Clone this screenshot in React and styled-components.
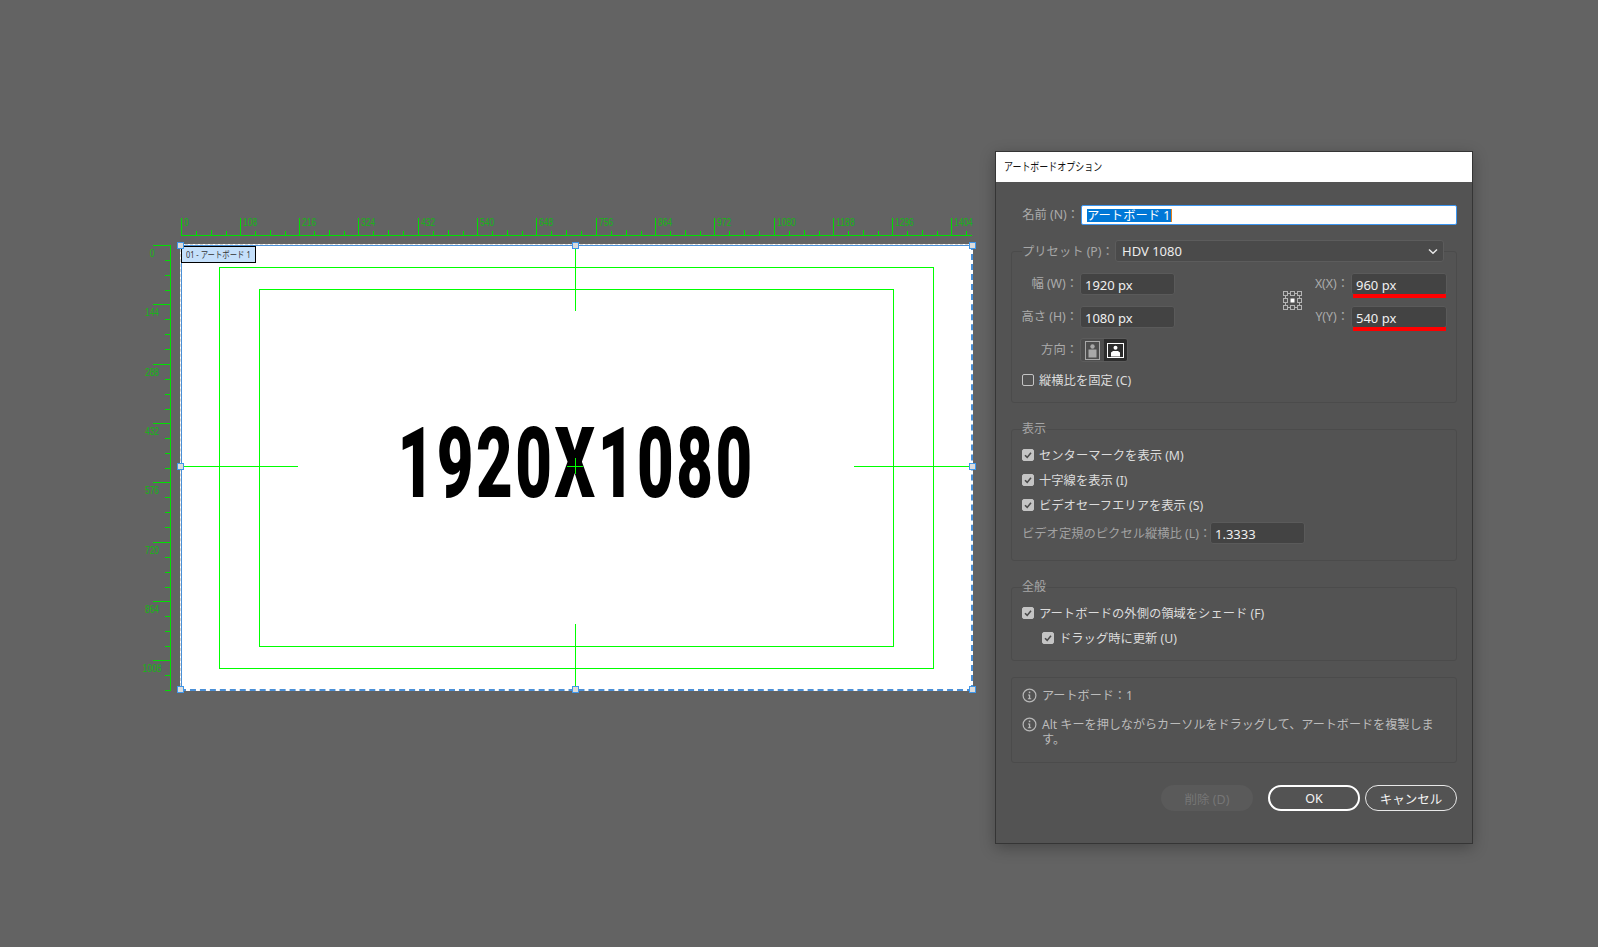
import React from "react";
import styled, { createGlobalStyle } from "styled-components";

const GREEN = "#00e000";
const UI_FONT = `"Noto Sans", "Noto Sans CJK JP", sans-serif`;

const GlobalStyle = createGlobalStyle`
  html, body {
    margin: 0;
    height: 100%;
    background: #636363;
  }
  * {
    box-sizing: border-box;
  }
`;

const Page = styled.div`
  position: relative;
  width: 1598px;
  height: 947px;
  overflow: hidden;
  background: #636363;
  font-family: ${UI_FONT};
`;

/* ---------- canvas ---------- */

const RulerSvg = styled.svg`
  position: absolute;
  left: 0;
  top: 0;
  pointer-events: none;
`;

const Artboard = styled.div`
  position: absolute;
  left: 180px;
  top: 244px;
  width: 793px;
  height: 447px;
  background: #fff;
  display: flex;
  align-items: center;
  justify-content: center;
  border-top: 1px dashed #d8d8d8;
  border-left: 1px dashed #d8d8d8;
  border-right: 2px dashed #4a8fd6;
  border-bottom: 2px dashed #4a8fd6;
  box-shadow: inset 1px 1px 0 #4a8fd6;
`;

const BoardLabel = styled.div`
  position: absolute;
  left: 0px;
  top: 1px;
  width: 75px;
  height: 17px;
  padding-left: 4px;
  background: #c5e0fb;
  border: 1px solid #000;
  color: #333;
  font-size: 9px;
  line-height: 15px;
  white-space: nowrap;
`;

/* the source UI font has narrow kana, so these strings get squeezed */
const Narrow = styled.span`
  display: inline-block;
  transform: scaleX(${(p) => p.$x});
  transform-origin: left center;
`;

const SafeArea = styled.div`
  position: absolute;
  border: 1px solid #00ff00;
  left: ${(p) => p.$left}px;
  top: ${(p) => p.$top}px;
  width: ${(p) => p.$w}px;
  height: ${(p) => p.$h}px;
`;

const Mark = styled.div`
  position: absolute;
  background: #00ff00;
  left: ${(p) => p.$left}px;
  top: ${(p) => p.$top}px;
  width: ${(p) => p.$w}px;
  height: ${(p) => p.$h}px;
`;

const Handle = styled.div`
  position: absolute;
  width: 7px;
  height: 7px;
  background: #dcdcdc;
  border: 1px solid #3f97ea;
  left: ${(p) => p.$left}px;
  top: ${(p) => p.$top}px;
`;

const BigTitle = styled.div`
  margin-top: -8px;
  font-family: Roboto, "Liberation Sans", sans-serif;
  font-weight: 900;
  font-size: 99px;
  line-height: 1;
  letter-spacing: 4px;
  color: #000;
  transform: scaleX(0.64);
  white-space: nowrap;
`;

const Ruler = () => {
  const topMajors = [];
  const leftMajors = [];
  for (let i = 0; i < 14; i++) topMajors.push(i);
  for (let i = 0; i < 8; i++) leftMajors.push(i);
  const step = 59.3;
  return (
    <RulerSvg width="1000" height="720" shapeRendering="crispEdges">
      <g stroke={GREEN} strokeWidth="1">
        <line x1="180.5" y1="235.5" x2="972" y2="235.5" />
        <line x1="170.5" y1="245" x2="170.5" y2="691" />
        <line x1="165" y1="690.5" x2="170" y2="690.5" />
        {topMajors.map((i) => {
          const x = Math.round(180.5 + i * step) + 0.5;
          return (
            <g key={i}>
              <line x1={x} y1="218" x2={x} y2="235" />
              {[1, 2, 3].map((q) => {
                const qx = Math.round(x + (q * step) / 4) + 0.5;
                if (qx > 971) return null;
                return <line key={q} x1={qx} y1={q === 2 ? 230 : 231} x2={qx} y2="235" />;
              })}
            </g>
          );
        })}
        {leftMajors.map((i) => {
          const y = Math.round(245 + i * step) + 0.5;
          return (
            <g key={i}>
              <line x1="153" y1={y} x2="170" y2={y} />
              {[1, 2, 3].map((q) => {
                const qy = Math.round(y + (q * step) / 4) + 0.5;
                if (qy > 690) return null;
                return <line key={q} x1="165" y1={qy} x2="170" y2={qy} />;
              })}
            </g>
          );
        })}
      </g>
      <g fill="#12b812" fontSize="10.5" fontFamily={`"Liberation Sans", sans-serif`} shapeRendering="auto">
        {topMajors.map((i) => {
          const label = String(i * 108);
          return (
            <text
              key={i}
              x={Math.round(180.5 + i * step) + 3}
              y="226"
              textLength={label.length * 4.7}
              lengthAdjust="spacingAndGlyphs"
            >
              {label}
            </text>
          );
        })}
        {leftMajors.map((i) => {
          const label = String(i * 144);
          return (
            <text
              key={i}
              x={152 - (label.length * 4.7) / 2}
              y={Math.round(245 + i * step) + 11.5}
              textLength={label.length * 4.7}
              lengthAdjust="spacingAndGlyphs"
            >
              {label}
            </text>
          );
        })}
      </g>
    </RulerSvg>
  );
};

/* ---------- dialog ---------- */

const Dialog = styled.div`
  position: absolute;
  left: 995px;
  top: 151px;
  width: 478px;
  height: 693px;
  background: #535353;
  border: 1px solid #353535;
  box-shadow: 0 4px 14px rgba(0, 0, 0, 0.28);
  color: #d6d6d6;
  font-size: 12.3px;
`;

const TitleBar = styled.div`
  height: 30px;
  padding-left: 8px;
  background: #fff;
  color: #111;
  font-size: 11.5px;
  line-height: 29px;
  white-space: nowrap;
`;

const Body = styled.div`
  padding: 23px 15px 0 15px;
  display: flex;
  flex-direction: column;
`;

const NameRow = styled.div`
  display: flex;
  align-items: center;
  height: 20px;
`;

const FieldLabel = styled.label`
  flex: none;
  width: ${(p) => p.$w || 59}px;
  padding-right: 2px;
  text-align: right;
  color: #ababab;
  white-space: nowrap;
  line-height: 20px;
`;

const NameInput = styled.div`
  flex: 1;
  height: 20px;
  padding-left: 5px;
  background: #fff;
  border: 1px solid #3b95f0;
  border-radius: 2px;
  display: flex;
  align-items: center;
`;

const Selected = styled.span`
  height: 13px;
  padding-right: 1px;
  background: #0078d7;
  border-right: 1px solid #e0801e;
  color: #fff;
  line-height: 13px;
  white-space: nowrap;
`;

const Group = styled.fieldset`
  margin: ${(p) => p.$top}px 0 0;
  padding: ${(p) => p.$pad || "0 0 0 10px"};
  height: ${(p) => p.$h}px;
  border: 1px solid #4b4b4b;
  border-radius: 3px;
  min-width: 0;
  display: flex;
  flex-direction: column;
`;

const Legend = styled.legend`
  margin-left: 0;
  padding: 0;
  color: #a6a6a6;
  font-size: 12px;
  line-height: 16px;
`;

const PresetLegend = styled.legend`
  margin-left: 0;
  padding: 0;
  display: flex;
  align-items: center;
  height: 22px;
`;

const LegendText = styled.span`
  width: 93px;
  color: #a6a6a6;
  white-space: nowrap;
`;

const Select = styled.div`
  position: relative;
  width: 329px;
  height: 22px;
  padding-left: 6px;
  background: #4a4a4a;
  border: 1px solid #5c5c5c;
  border-radius: 3px;
  color: #ececec;
  font-size: 13px;
  line-height: 21px;
`;

const Chevron = styled.svg`
  position: absolute;
  right: 5px;
  top: 7px;
`;

const SizeGrid = styled.div`
  position: relative;
  display: grid;
  grid-template-columns: 59px 95px 1fr;
  grid-auto-rows: 22px;
  row-gap: 11px;
  align-items: center;
  margin-top: 11px;
  margin-left: -1px;
`;

const NumInput = styled.div`
  width: ${(p) => p.$w || 95}px;
  height: 22px;
  padding-left: 4px;
  background: #434343;
  border: 1px solid #5a5a5a;
  border-radius: 3px;
  color: #f0f0f0;
  font-size: 13px;
  line-height: 22px;
`;

const PosColumn = styled.div`
  position: absolute;
  left: 262px;
  top: 0;
  display: grid;
  grid-template-columns: 19px 49px 96px;
  grid-auto-rows: 22px;
  row-gap: 11px;
  align-items: center;
`;

const PosLabel = styled.label`
  padding-right: 2px;
  text-align: right;
  color: #ababab;
  line-height: 20px;
  grid-column: 2;
  white-space: nowrap;
`;

const RedInput = styled(NumInput)`
  position: relative;
  &::after {
    content: "";
    position: absolute;
    left: 1px;
    right: 0;
    bottom: -4px;
    height: 4px;
    background: #ff0000;
  }
`;

const RefIcon = styled.svg`
  position: absolute;
  left: 0;
  top: 18px;
`;

const Toggle = styled.div`
  display: flex;
  width: 48px;
  height: 24px;
  background: #4d4d4d;
  border: 1px solid #5c5c5c;
  border-radius: 3px;
  overflow: hidden;
`;

const ToggleBtn = styled.div`
  width: 23px;
  display: flex;
  align-items: center;
  justify-content: center;
  background: ${(p) => (p.$on ? "#2c2c2c" : "transparent")};
`;

const CheckRow = styled.div`
  display: flex;
  align-items: center;
  height: 16px;
  margin-top: ${(p) => p.$top}px;
  margin-left: ${(p) => p.$indent || 0}px;
  color: #dcdcdc;
  white-space: nowrap;
`;

const Box = styled.span`
  flex: none;
  width: 12px;
  height: 12px;
  margin-right: 5px;
  border-radius: 2px;
  background: ${(p) => (p.$checked ? "#c4c4c4" : "transparent")};
  border: 1px solid #c4c4c4;
  display: flex;
  align-items: center;
  justify-content: center;
`;

const RatioRow = styled.div`
  display: flex;
  align-items: center;
  height: 22px;
  margin-top: 9px;
  white-space: nowrap;
`;

const RatioLabel = styled.span`
  color: #a2a2a2;
  width: 187px;
  margin-right: 1px;
`;

const InfoRow = styled.div`
  display: flex;
  align-items: flex-start;
  margin-top: ${(p) => p.$top}px;
  color: #bcbcbc;
  font-size: 12.1px;
  line-height: 15px;
`;

const InfoIcon = styled.svg`
  flex: none;
  margin-right: 5px;
`;

const Buttons = styled.div`
  display: flex;
  justify-content: flex-end;
  align-items: center;
  margin-top: 22px;
`;

const Button = styled.div`
  width: 92px;
  height: 26px;
  border-radius: 13px;
  margin-left: ${(p) => p.$gap || 0}px;
  display: flex;
  align-items: center;
  justify-content: center;
  font-size: 12.5px;
  color: ${(p) => (p.$disabled ? "#767676" : "#f4f4f4")};
  background: ${(p) => (p.$disabled ? "#5a5a5a" : "transparent")};
  border: ${(p) => (p.$disabled ? "none" : p.$primary ? "2px solid #fff" : "1px solid #e8e8e8")};
`;

const Check = () => (
  <svg width="10" height="10" viewBox="0 0 10 10">
    <path d="M2 5.2 L4.2 7.4 L8 2.8" fill="none" stroke="#4a4a4a" strokeWidth="1.6" />
  </svg>
);

const CheckItem = ({ top, indent, checked = true, children }) => (
  <CheckRow $top={top} $indent={indent}>
    <Box $checked={checked}>{checked && <Check />}</Box>
    {children}
  </CheckRow>
);

const Info = () => (
  <InfoIcon width="15" height="15" viewBox="0 0 15 15">
    <circle cx="7.5" cy="7.5" r="6.4" fill="none" stroke="#b8b8b8" strokeWidth="1.2" />
    <rect x="6.8" y="3.6" width="1.5" height="1.6" fill="#b8b8b8" />
    <path d="M6 6.4 H8.2 V10.2 H9.2 V11.2 H5.9 V10.2 H6.9 V7.4 H6 Z" fill="#b8b8b8" />
  </InfoIcon>
);

const Portrait = () => (
  <svg width="15" height="19" viewBox="0 0 15 19">
    <rect x="0.5" y="0.5" width="14" height="18" fill="none" stroke="#a8a8a8" />
    <circle cx="7.5" cy="5.5" r="2.2" fill="#a8a8a8" />
    <rect x="3.5" y="8.5" width="8" height="8" fill="#a8a8a8" />
  </svg>
);

const Landscape = () => (
  <svg width="17" height="15" viewBox="0 0 17 15">
    <rect x="0.5" y="0.5" width="16" height="14" fill="none" stroke="#fff" />
    <circle cx="8.5" cy="4.8" r="2" fill="#fff" />
    <path d="M4 13.5 V9.6 L6 8 H11 L13 9.6 V13.5 Z" fill="#fff" />
  </svg>
);

const RefPoint = () => {
  const spots = [
    [0.5, 0.5], [7.5, 0.5], [14.5, 0.5],
    [0.5, 7.5], [14.5, 7.5],
    [0.5, 14.5], [7.5, 14.5], [14.5, 14.5],
  ];
  return (
    <RefIcon width="19" height="19" viewBox="0 0 19 19">
      <g fill="none" stroke="#b4b4b4">
        <path d="M4.5 2.5 H7.5 M11.5 2.5 H14.5 M2.5 4.5 V7.5 M2.5 11.5 V14.5 M16.5 4.5 V7.5 M16.5 11.5 V14.5 M4.5 16.5 H7.5 M11.5 16.5 H14.5" />
        {spots.map(([x, y]) => (
          <rect key={`${x}-${y}`} x={x} y={y} width="4" height="4" />
        ))}
      </g>
      <rect x="7.5" y="7.5" width="4" height="4" fill="#fff" />
    </RefIcon>
  );
};

const App = () => (
  <Page>
    <GlobalStyle />
    <Ruler />
    <Artboard>
      <SafeArea $left={38} $top={22} $w={715} $h={402} />
      <SafeArea $left={78} $top={44} $w={635} $h={358} />
      <Mark $left={394} $top={-1} $w={1} $h={67} />
      <Mark $left={394} $top={379} $w={1} $h={66} />
      <Mark $left={-1} $top={221} $w={118} $h={1} />
      <Mark $left={673} $top={221} $w={119} $h={1} />
      <BigTitle>1920X1080</BigTitle>
      <Mark $left={386} $top={221} $w={16} $h={1} />
      <Mark $left={394} $top={213} $w={1} $h={16} />
      <BoardLabel>
        <Narrow $x={0.82}>01 - アートボード 1</Narrow>
      </BoardLabel>
      <Handle $left={-4} $top={-3} />
      <Handle $left={391} $top={-3} />
      <Handle $left={788} $top={-3} />
      <Handle $left={-4} $top={218} />
      <Handle $left={788} $top={218} />
      <Handle $left={-4} $top={441} />
      <Handle $left={391} $top={441} />
      <Handle $left={788} $top={441} />
    </Artboard>

    <Dialog>
      <TitleBar>
        <Narrow $x={0.78}>アートボードオプション</Narrow>
      </TitleBar>
      <Body>
        <NameRow>
          <FieldLabel $w={70}>名前 (N)：</FieldLabel>
          <NameInput>
            <Selected>アートボード 1</Selected>
          </NameInput>
        </NameRow>

        <Group $top={15} $h={163}>
          <PresetLegend>
            <LegendText>プリセット (P)：</LegendText>
            <Select>
              HDV 1080
              <Chevron width="10" height="7" viewBox="0 0 10 7">
                <path d="M1 1.5 L5 5.2 L9 1.5" fill="none" stroke="#e8e8e8" strokeWidth="1.5" />
              </Chevron>
            </Select>
          </PresetLegend>
          <SizeGrid>
            <FieldLabel>幅 (W)：</FieldLabel>
            <NumInput>1920 px</NumInput>
            <span />
            <FieldLabel>高さ (H)：</FieldLabel>
            <NumInput>1080 px</NumInput>
            <span />
            <FieldLabel>方向：</FieldLabel>
            <Toggle>
              <ToggleBtn>
                <Portrait />
              </ToggleBtn>
              <ToggleBtn $on>
                <Landscape />
              </ToggleBtn>
            </Toggle>
            <span />
            <PosColumn>
              <RefPoint />
              <PosLabel>X(X)：</PosLabel>
              <RedInput $w={96}>960 px</RedInput>
              <PosLabel>Y(Y)：</PosLabel>
              <RedInput $w={96}>540 px</RedInput>
            </PosColumn>
          </SizeGrid>
          <CheckItem top={11} checked={false}>
            縦横比を固定 (C)
          </CheckItem>
        </Group>

        <Group $top={18} $h={140}>
          <Legend>表示</Legend>
          <CheckItem top={10}>センターマークを表示 (M)</CheckItem>
          <CheckItem top={9}>十字線を表示 (I)</CheckItem>
          <CheckItem top={9}>ビデオセーフエリアを表示 (S)</CheckItem>
          <RatioRow>
            <RatioLabel>ビデオ定規のピクセル縦横比 (L)：</RatioLabel>
            <NumInput>1.3333</NumInput>
          </RatioRow>
        </Group>

        <Group $top={18} $h={82}>
          <Legend>全般</Legend>
          <CheckItem top={10}>アートボードの外側の領域をシェード (F)</CheckItem>
          <CheckItem top={9} indent={20}>
            ドラッグ時に更新 (U)
          </CheckItem>
        </Group>

        <Group $top={16} $h={86} $pad="10px 10px 0 10px">
          <InfoRow $top={0}>
            <Info />
            アートボード：1
          </InfoRow>
          <InfoRow $top={14}>
            <Info />
            <span>Alt キーを押しながらカーソルをドラッグして、アートボードを複製します。</span>
          </InfoRow>
        </Group>

        <Buttons>
          <Button $disabled>削除 (D)</Button>
          <Button $primary $gap={15}>
            OK
          </Button>
          <Button $gap={5}>キャンセル</Button>
        </Buttons>
      </Body>
    </Dialog>
  </Page>
);

export default App;
